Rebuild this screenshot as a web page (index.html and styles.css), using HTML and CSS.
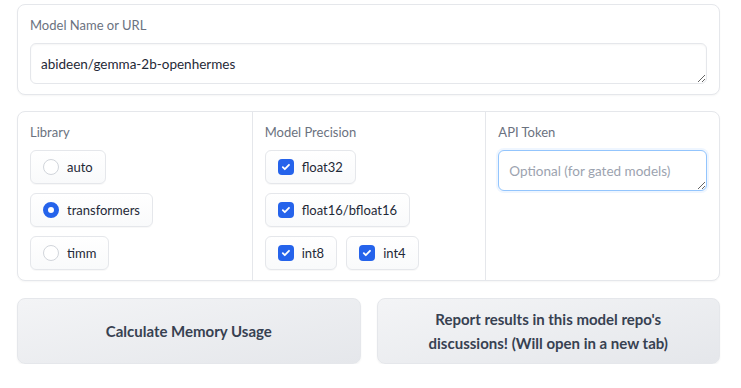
FILE: index.html
```html
<!DOCTYPE html>
<html lang="en">

<head>
    <meta charset="UTF-8">
    <meta name="viewport" content="width=device-width, initial-scale=1.0">
    <title>Model Memory Usage</title>
    <link rel="stylesheet" href="styles.css">
</head>

<body>
    <div class="app">
        <!-- Model name -->
        <div class="block">
            <label class="block-label" for="modelName">Model Name or URL</label>
            <textarea class="text-input" id="modelName" rows="1">abideen/gemma-2b-openhermes</textarea>
        </div>

        <!-- Options row -->
        <div class="block options">
            <div class="column">
                <span class="block-label">Library</span>
                <div class="choices stacked">
                    <label class="choice"><span class="radio"></span>auto</label>
                    <label class="choice"><span class="radio checked"></span>transformers</label>
                    <label class="choice"><span class="radio"></span>timm</label>
                </div>
            </div>
            <div class="column">
                <span class="block-label">Model Precision</span>
                <div class="choices">
                    <label class="choice"><span class="check"></span>float32</label>
                    <label class="choice"><span class="check"></span>float16/bfloat16</label>
                    <label class="choice"><span class="check"></span>int8</label>
                    <label class="choice"><span class="check"></span>int4</label>
                </div>
            </div>
            <div class="column">
                <label class="block-label" for="apiToken">API Token</label>
                <textarea class="text-input focused" id="apiToken" rows="1" placeholder="Optional (for gated models)"></textarea>
            </div>
        </div>

        <!-- Buttons -->
        <div class="actions">
            <button type="button" class="btn">Calculate Memory Usage</button>
            <button type="button" class="btn">Report results in this model repo's discussions! (Will open in a new tab)</button>
        </div>
    </div>
</body>

</html>
```

FILE: styles.css
```css
body {
    font-family: 'Lato', 'Noto Sans', sans-serif;
    margin: 0;
    padding: 0;
    background-color: #fff;
    color: #1f2937;
}

.app {
    width: 703px;
    padding: 4px 0 0 17px;
    display: flex;
    flex-direction: column;
    gap: 16px;
}

.block {
    border: 1px solid #e5e7eb;
    border-radius: 8px;
    padding: 12px 12px 10px 12px;
    background-color: #fff;
    box-shadow: 0 1px 2px rgba(0, 0, 0, 0.04);
}

.block-label {
    display: block;
    font-size: 13px;
    color: #6b7280;
    margin-bottom: 10px;
    line-height: 16px;
}

.text-input {
    display: block;
    width: 100%;
    box-sizing: border-box;
    height: 41px;
    padding: 10px 10px;
    font-family: inherit;
    font-size: 13.5px;
    line-height: 20px;
    color: #1f2937;
    border: 1px solid #e5e7eb;
    border-radius: 6px;
    box-shadow: inset 0 1px 2px rgba(0, 0, 0, 0.04);
    resize: vertical;
    outline: none;
    white-space: nowrap;
    overflow: hidden;
}

.text-input::placeholder {
    color: #9ca3af;
}

.text-input.focused {
    border-color: #93c5fd;
    box-shadow: 0 0 0 2px #eff6ff;
}

.options {
    display: grid;
    grid-template-columns: repeat(3, minmax(0, 1fr));
    padding: 0;
}

.column {
    padding: 12px 12px 10px 12px;
    border-left: 1px solid #e5e7eb;
}

.column:first-child {
    border-left: none;
}

.choices {
    display: flex;
    flex-wrap: wrap;
    gap: 9px;
}

.choices.stacked {
    flex-direction: column;
    align-items: flex-start;
}

.choice {
    display: flex;
    align-items: center;
    gap: 8px;
    height: 34px;
    box-sizing: border-box;
    padding: 0 12px;
    font-size: 13px;
    color: #1f2937;
    background: linear-gradient(to bottom, #fff, #f9fafb);
    border: 1px solid #e5e7eb;
    border-radius: 6px;
    box-shadow: 0 1px 1px rgba(0, 0, 0, 0.03);
}

.radio {
    width: 16px;
    height: 16px;
    border: 1px solid #d1d5db;
    border-radius: 50%;
    background-color: #fff;
    box-sizing: border-box;
}

.radio.checked {
    border: 5px solid #2563eb;
    background-color: #fff;
}

.check {
    width: 16px;
    height: 16px;
    border-radius: 4px;
    background-color: #2563eb;
    background-image: url("data:image/svg+xml,%3Csvg xmlns='http://www.w3.org/2000/svg' viewBox='0 0 16 16'%3E%3Cpath d='M4.8 8.2l2 2 4.2-4.4' fill='none' stroke='white' stroke-width='1.8' stroke-linecap='round' stroke-linejoin='round'/%3E%3C/svg%3E");
}

.actions {
    display: flex;
    gap: 16px;
    margin-top: 1px;
}

.btn {
    flex: 1;
    height: 66px;
    padding: 0 40px;
    font-family: inherit;
    font-size: 15px;
    font-weight: bold;
    line-height: 24px;
    color: #374151;
    background: linear-gradient(to bottom right, #f3f4f6, #e5e7eb);
    border: 1px solid #e5e7eb;
    border-radius: 8px;
    box-shadow: 0 1px 2px rgba(0, 0, 0, 0.05);
    cursor: pointer;
}
```
